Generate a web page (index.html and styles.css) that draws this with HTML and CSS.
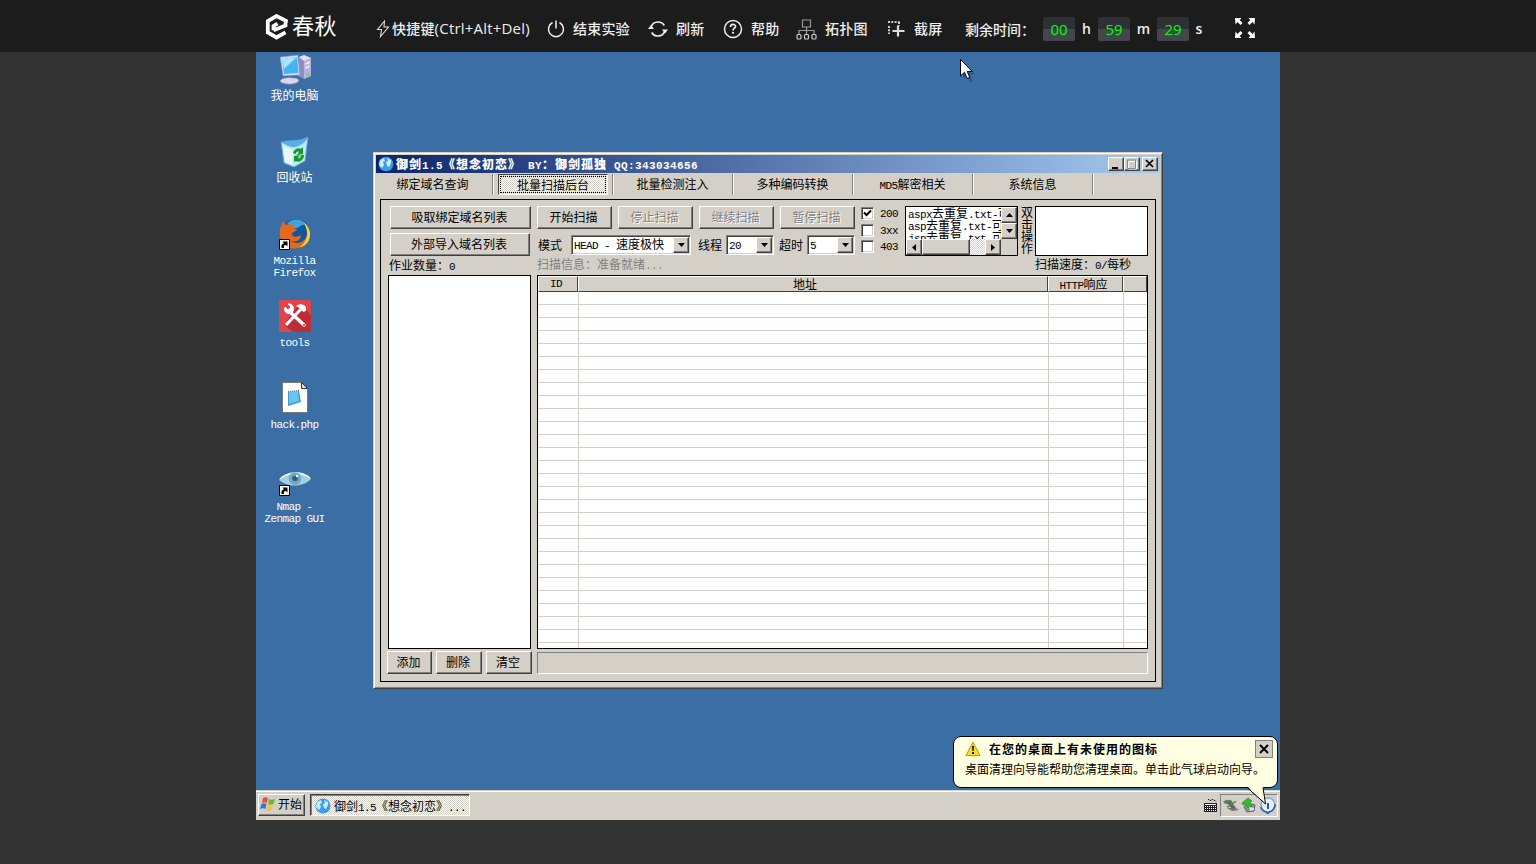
FILE: index.html
```html
<!DOCTYPE html>
<html lang="zh-CN">
<head>
<meta charset="utf-8">
<title>春秋</title>
<link rel="stylesheet" href="styles.css">
</head>
<body>
<header class="topbar">
  <div class="logo">
    <svg width="24" height="26" viewBox="0 0 24 26"><path d="M21 8.4V6.9L11.5 2 2.8 7v11.500l8.700 5 9-5.200M8.500 16.200l12-4.700V8.400M8.500 16.200V12l4-2.500" fill="none" stroke="#fff" stroke-width="3.800"/></svg>
    <span class="logo-text">春秋</span>
  </div>
  <div class="tool t-keys">
    <svg width="14" height="18" viewBox="0 0 14 18"><path d="M8.500 1L1.500 9.500h4L4.500 16.500 12.500 7H8z" fill="none" stroke="#ddd" stroke-width="1.100"/></svg>
    <span>快捷键<span class="en">(Ctrl+Alt+Del)</span></span>
  </div>
  <div class="tool t-end">
    <svg width="18" height="18" viewBox="0 0 18 18"><path d="M5.500 2.500a7.500 7.500 0 1 0 7 0M9 .5v8" fill="none" stroke="#eee" stroke-width="1.500"/></svg>
    <span>结束实验</span>
  </div>
  <div class="tool t-refresh">
    <svg width="20" height="18" viewBox="0 0 20 18"><path d="M3 7.500C4 3.500 7 2 10 2c3 0 5 1.200 6.300 3.500M17 10.500C16 14.500 13 16 10 16c-3 0-5-1.200-6.300-3.500" fill="none" stroke="#eee" stroke-width="1.700"/><path d="M0 9l3-4 3 4zM20 9.500l-3 4-3-4z" fill="#eee"/></svg>
    <span>刷新</span>
  </div>
  <div class="tool t-help">
    <svg width="20" height="20" viewBox="0 0 20 20"><circle cx="10" cy="10" r="8.500" fill="none" stroke="#eee" stroke-width="1.500"/><path d="M7.500 8c0-3.500 5-3.300 5-.6 0 1.800-2.500 1.800-2.500 4" fill="none" stroke="#eee" stroke-width="1.700"/><circle cx="10" cy="13.800" r="1.100" fill="#eee"/></svg>
    <span>帮助</span>
  </div>
  <div class="tool t-topo">
    <svg width="21" height="21" viewBox="0 0 21 21" fill="none" stroke="#999" stroke-width="1.200"><path d="M6.500 1h8v7h-8zM10.500 8v7M3 15v-3.500h15V15"/><g stroke="#ccc"><rect x="1" y="15.500" width="4" height="4.500" rx="1"/><rect x="8.500" y="15.500" width="4" height="4.500" rx="1"/><rect x="16" y="15.500" width="4" height="4.500" rx="1"/></g></svg>
    <span>拓扑图</span>
  </div>
  <div class="tool t-shot">
    <svg width="18" height="18" viewBox="0 0 18 18"><path d="M1 2h11.500M2 6v8" fill="none" stroke="#ccc" stroke-width="2" stroke-dasharray="2 1.300"/><path d="M12 2v4" stroke="#ccc" stroke-width="2" stroke-dasharray="2 1.300"/><path d="M11 5.500v11M5.500 11h12" stroke="#ddd" stroke-width="2.200"/></svg>
    <span>截屏</span>
  </div>
  <div class="timer"><span class="timer-label">剩余时间：</span><b class="digit">00</b><i class="u1">h</i><b class="digit">59</b><i class="u2">m</i><b class="digit">29</b><i class="u3">s</i></div>
  <svg class="full" width="20" height="20" viewBox="0 0 20 20"><path d="M0 0h6.500L4.700 2 7.500 5 5.500 7 2.500 4 .5 6.500zM20 0h-6.500l1.800 2-2.800 3 2 2 3-3 2 2.500zM0 20h6.500l-1.800-2 2.800-3-2-2-3 3-2-2.500zM20 20h-6.500l1.800-2-2.800-3 2-2 3 3 2-2.500z" fill="#fff"/></svg>
</header>

<main class="desktop">
  <nav class="icons">
    <div class="dicon">
      <svg width="32" height="32" viewBox="0 0 32 32"><path d="M20 3l5-2 7 3v18l-7 3-6-3z" fill="#8f8cc2"/><path d="M25 7l7-3v18l-7 3z" fill="#b7b4de"/><path d="M20 3l5-2 7 3-7 3z" fill="#e2e0f5"/><path d="M26.500 9l4-1.700v2l-4 1.700zM26.500 13l4-1.700v2l-4 1.700z" fill="#eef"/><path d="M28 21l2.500-1" stroke="#5d5" stroke-width="2"/><path d="M1 27c1-3 8-4 13-3 5 0 7 2 5 4-4 3-16 3-18-1z" fill="#d9d7ee" stroke="#8b88b5" stroke-width=".7"/><path d="M1 3L19 1l2 20-17 1z" fill="#d8def5" stroke="#7788b8" stroke-width=".7"/><path d="M3 5l15-2 1.500 16L5 20z" fill="#45b4f5"/><path d="M3 5l15-2-13 12z" fill="#a4e4ff"/></svg>
      <span>我的电脑</span>
    </div>
    <div class="dicon">
      <svg width="32" height="32" viewBox="0 0 32 32"><path d="M2 6l10 3L29 1l-3 24-11 6-10-4z" fill="#c0e8fb" stroke="#5ba6d6"/><path d="M2 6c7-3 17 0 27-5-4 9-14 12-20 9z" fill="#5aaee6"/><path d="M4 10l10 4-1 15-7-3z" fill="#e8f8ff"/><path d="M14 17c1-4 6-6 8-4l2-2v7l-6 1 2-3c-2-1-3 0-3 2zM25 19c0 5-5 8-8 6l-2 1v-6l6-1-2 3c2 1 3-1 3-3z" fill="#149a20"/></svg>
      <span>回收站</span>
    </div>
    <div class="dicon">
      <svg width="32" height="32" viewBox="0 0 32 32"><circle cx="17" cy="15" r="14" fill="#14569c"/><path d="M8 6c5-6 15-6 19 1-4-2-7 4-12 3z" fill="#3ba7dd"/><path d="M4 3l3 4c2-1 4-1 5 0l3-1c-3 3 1 5 3 5-1 3-5 3-5 5 0 4 7 3 9 1 0 6-7 8-11 5 6 6 17 3 17-8 0-4-1-7-4-10 8 5 9 15 4 21-7 8-20 7-25-1C-1 17 1 10 4 3z" fill="#e7681d"/><path d="M24 4c8 5 9 15 4 21-2 2-4 4-7 4 9-7 9-17 3-25z" fill="#fbcf3b"/><path d="M.5 21.500h10v10H.5z" fill="#fff" stroke="#000"/><path d="M2.500 30c-.5-3 .5-4.500 2.500-4.500L3.500 23.500h5v5L7 27c-2 0-2.500 1-2 3z"/></svg>
      <span class="m">Mozilla<br>Firefox</span>
    </div>
    <div class="dicon">
      <svg width="32" height="32" viewBox="0 0 32 32"><rect width="32" height="32" rx="2" fill="#e3434b"/><path d="M17 8l6-3 9 10v17H14L5 25z" fill="#bd2d36"/><path d="M10 11l15 14" stroke="#fff" stroke-width="3.500" stroke-linecap="round"/><path d="M7 25L22 9" stroke="#fff" stroke-width="3"/><path d="M17 6c4-3 8-2 10 1v4l-3 1-2-3z" fill="#fff"/><path d="M6 7l3 3 3-3-3-3c5-1 7 5 4 9-4 2-9-1-7-6z" fill="#fff" stroke="#fff"/><circle cx="25" cy="25" r="1" fill="#bd2d36"/></svg>
      <span class="m">tools</span>
    </div>
    <div class="dicon">
      <svg width="32" height="32" viewBox="0 0 32 32"><path d="M3.500 .5h19l6 6v24h-25z" fill="#fff" stroke="#777"/><path d="M22.500 .5v6h6z" fill="#ddd" stroke="#333"/><path d="M9 10l11-1 2 11-13 4z" fill="#3e9bd2"/><path d="M10 10l9-1 1 10-10 3z" fill="#69c5ee"/><path d="M9 9.500l11-1" stroke="#567" stroke-dasharray="1 1"/></svg>
      <span class="m">hack.php</span>
    </div>
    <div class="dicon">
      <svg width="32" height="32" viewBox="0 0 32 32"><path d="M0 16C6 7 24 4 32 15c-7 8-23 9-32 1z" fill="#a4cee4"/><path d="M1 15C8 8 23 7 31 14" fill="none" stroke="#e8faff" stroke-width="1.500"/><circle cx="16" cy="14.500" r="6.300" fill="#70a9c5"/><circle cx="16" cy="14.500" r="2.800" fill="#365f77"/><circle cx="18" cy="12" r="1.200" fill="#fff"/><path d="M.5 21.500h10v10H.5z" fill="#fff" stroke="#000"/><path d="M2.500 30c-.5-3 .5-4.500 2.500-4.500L3.500 23.500h5v5L7 27c-2 0-2.500 1-2 3z"/></svg>
      <span class="m">Nmap -<br>Zenmap GUI</span>
    </div>
  </nav>

  <svg class="cursor" width="16" height="24" viewBox="0 0 16 24"><path d="M3 3v17l4-3 3 6h3l-3-7h5z" fill="#26476c" opacity=".5"/><path d="M.5 .5v16.500l4-3.700 2.700 6.200 2.600-1.100-2.600-6h5z" fill="#fff" stroke="#000"/></svg>

  <section class="window">
    <div class="titlebar">
      <svg width="16" height="16" viewBox="0 0 16 16"><circle cx="8" cy="8" r="7.300" fill="#3c9ce6"/><path d="M2 4l4-2 1 3-2 1 1 3-2 3-3-3zM9 2l4 2v3l-2 4-2-1-1-4 2-1z" fill="#c5ebff"/></svg>
      <span class="title">御剑<span class="m">1.5</span>《想念初恋》<span class="m">&nbsp;BY</span><span class="colon">：</span>御剑孤独<span class="m">&nbsp;QQ:343034656</span></span>
      <div class="caption">
        <span class="cap"><svg width="14" height="12"><path d="M3 9h6v2H3z"/></svg></span>
        <span class="cap"><svg width="14" height="12"><path d="M3.500 3.500h8v7.500h-8z" fill="none" stroke="#fff"/><path d="M2.500 2v8.500h8V2M2 2h9" fill="none" stroke="#888"/></svg></span>
        <span class="cap close"><svg width="14" height="12"><path d="M3 2l7 7M10 2L3 9" stroke="#000" stroke-width="1.700"/></svg></span>
      </div>
    </div>
    <div class="tabs">
      <span class="tab">绑定域名查询</span>
      <span class="tab"><span class="tab-on">批量扫描后台</span></span>
      <span class="tab">批量检测注入</span>
      <span class="tab">多种编码转换</span>
      <span class="tab"><span><span class="m">MD5</span>解密相关</span></span>
      <span class="tab">系统信息</span>
    </div>
    <div class="panel">
      <div class="left">
        <div class="btn wide">吸取绑定域名列表</div>
        <div class="btn wide second">外部导入域名列表</div>
        <div class="count">作业数量<span class="colon">：</span><span class="m">0</span></div>
        <div class="joblist"></div>
        <div class="jobbtns"><span class="btn">添加</span><span class="btn">删除</span><span class="btn">清空</span></div>
      </div>
      <div class="right">
        <div class="options">
          <div class="controls">
            <div class="scanbtns"><span class="btn">开始扫描</span><span class="btn off">停止扫描</span><span class="btn off">继续扫描</span><span class="btn off">暂停扫描</span></div>
            <div class="combos">
              <span class="lab mode">模式</span><span class="combo big"><span class="val"><span class="m">HEAD - </span>速度极快</span><span class="arrow"><svg width="7" height="4"><path d="M0 0h7L3.500 4z"/></svg></span></span>
              <span class="lab thread">线程</span><span class="combo"><span class="val"><span class="m">20</span></span><span class="arrow"><svg width="7" height="4"><path d="M0 0h7L3.500 4z"/></svg></span></span>
              <span class="lab timeout">超时</span><span class="combo"><span class="val"><span class="m">5</span></span><span class="arrow"><svg width="7" height="4"><path d="M0 0h7L3.500 4z"/></svg></span></span>
            </div>
            <div class="info">扫描信息<span class="colon">：</span>准备就绪<span class="m">...</span></div>
          </div>
          <div class="checks">
            <label><i class="box"><svg width="9" height="9"><path d="M1 3.500L3.500 6 8 1.500" fill="none" stroke="#000" stroke-width="2"/></svg></i><span class="m">200</span></label>
            <label><i class="box"></i><span class="m">3xx</span></label>
            <label><i class="box"></i><span class="m">403</span></label>
          </div>
          <div class="files">
            <div class="names"><div><span class="m">aspx</span>去重复<span class="m">.txt-</span>可</div><div><span class="m">asp</span>去重复<span class="m">.txt-</span>可</div><div><span class="m">jsp</span>去重复<span class="m">.txt-</span>可</div></div>
            <div class="vbar"><span class="sb"><svg width="7" height="4"><path d="M0 4h7L3.500 0z"/></svg></span><span class="sb"><svg width="7" height="4"><path d="M0 0h7L3.500 4z"/></svg></span></div>
            <div class="hbar"><span class="sb"><svg width="4" height="7"><path d="M4 0v7L0 3.500z"/></svg></span><span class="sb thumb"></span><span class="gap"></span><span class="sb"><svg width="4" height="7"><path d="M0 0v7l4-3.500z"/></svg></span></div>
            <div class="corner"></div>
          </div>
          <div class="vtext">双击操作</div>
          <div class="speed"><div class="speedbox"></div><div class="speedtext">扫描速度<span class="colon">：</span><span class="m">0/</span>每秒</div></div>
        </div>
        <div class="table">
          <div class="cols head"><span class="m">ID</span><span class="addr">地址</span><span><span><span class="m">HTTP</span>响应</span></span><span></span></div>
          <div class="cols rows"><span></span><span></span><span></span><span></span></div>
        </div>
        <div class="status"></div>
      </div>
    </div>
  </section>

  <footer class="taskbar">
    <div class="start"><svg width="16" height="16" viewBox="0 0 16 16"><path d="M3 2c2-1 3-1 5 0L7 7C5 6 4 6 2 7z" fill="#e8512b"/><path d="M9 3c2 1 3 1 6 0l-1.500 5c-2 1-4 1-5.500 0z" fill="#69b832"/><path d="M1.500 8c2-1 3-1 5 0l-1 5C4 12 2 12 0 13z" fill="#3474dc"/><path d="M7.500 9c2 1 3 1 5.500 0l-1.500 5c-2 1-3.500 1-5 0z" fill="#f8c32a"/></svg>开始</div>
    <div class="task"><svg width="16" height="16" viewBox="0 0 16 16"><circle cx="8" cy="8" r="7.500" fill="#3c9ce6"/><path d="M2 4l4-2 1 3-2 1 1 3-2 3-3-3zM9 2l4 2v3l-2 4-2-1-1-4 2-1z" fill="#c5ebff"/></svg><span>御剑<span class="m">1.5</span>《想念初恋》<span class="m">...</span></span></div>
    <svg class="kbd" width="13" height="15" viewBox="0 0 13 15"><path d="M4 1.500h1l1 1h1l1-1h1l1 1h1l1 1" fill="none" stroke="#222"/><path d="M0 5h13v9H0z" fill="#222"/><path d="M1 6.500h11" stroke="#fff"/><path d="M1 8.500h11M1 10.500h11M1 12.500h11" stroke="#fff" stroke-dasharray="1 1"/></svg>
    <div class="tray">
      <svg width="16" height="16" viewBox="0 0 16 16"><path d="M0 4l8-1 2 3-8 1zM4 11l9 0 3 2-7 1z" fill="#777"/><path d="M2 4l6 0 5 7-4 1z" fill="#666"/><path d="M2 4l5-.5M8 7l5-2.500M4 10l4-1.500" stroke="#4a9b3f" stroke-width="1.500"/></svg>
      <svg width="16" height="16" viewBox="0 0 16 16"><path d="M6 6l8 2-1 6-7 1-3-5z" fill="#8e9398" stroke="#666"/><path d="M1 6l6-5 4 3-2 1 2 4-4 2-3-4-2 1z" fill="#2fbd2c" stroke="#237c20" stroke-width=".6"/><path d="M8 10l5 1v2l-4 1z" fill="#dde"/></svg>
      <svg width="18" height="17" viewBox="0 0 18 17"><circle cx="9" cy="8" r="7" fill="#e8f2ff" stroke="#7ba5da" stroke-width="1.500"/><path d="M16 7c0 4-2 7-6 8l-1 2-2-2c-3-1-5-3-5-5" fill="none" stroke="#2c5fa6" stroke-width="1.500"/><path d="M8 6h2v6H8z" fill="#25569c"/></svg>
    </div>
  </footer>

  <aside class="balloon">
    <svg class="tail" width="22" height="20" viewBox="0 0 22 20"><path d="M0 0l19 18L16 0" fill="#ffffe1"/><path d="M0 1.500l18.500 16.500L16 1.500" fill="none" stroke="#000"/></svg>
    <div class="bhead"><svg width="16" height="16" viewBox="0 0 16 16"><path d="M8 1l7 13.500H1z" fill="#fddc22" stroke="#b59b22" stroke-linejoin="round"/><path d="M7 5h2l-.4 5H7.400zM7 11h2v2H7z" fill="#111"/></svg><span>在您的桌面上有未使用的图标</span><i class="bclose"><svg width="10" height="10"><path d="M1 1l8 8M9 1L1 9" stroke="#000" stroke-width="2"/></svg></i></div>
    <div class="bbody">桌面清理向导能帮助您清理桌面。单击此气球启动向导。</div>
  </aside>
</main>
</body>
</html>
```

FILE: styles.css
```css
* { box-sizing: border-box; }
body {
  margin: 0;
  width: 1536px;
  height: 864px;
  overflow: hidden;
  background: #333;
  font: 12px/12px "Noto Sans CJK SC", sans-serif;
  color: #000;
}
svg { display: block; flex: none; }
i, b { font-style: normal; font-weight: normal; }
/* half-width characters, 6px advance */
.m { font-family: "Liberation Mono", monospace; font-size: 11px; letter-spacing: -.6px; line-height: 0; white-space: pre; }
.colon { font-family: "Noto Sans CJK TC", sans-serif; line-height: 0; }

/* top bar */
.topbar {
  height: 52px;
  background: #1c1c1c;
  color: #eee;
  display: flex;
  align-items: center;
  padding: 6px 0 0 265px;
  font-size: 14px;
  line-height: 20px;
  font-weight: 500;
  white-space: nowrap;
}
.logo { width: 111px; display: flex; gap: 3px; align-items: center; margin-top: -5px; }
.logo-text { font-size: 22px; line-height: 22px; font-weight: 400; color: #fff; letter-spacing: .5px; padding-bottom: 5px; }
.tool { display: flex; align-items: center; letter-spacing: .2px; }
.tool > span { padding-bottom: 2px; }
.en { font-family: "Open Sans", sans-serif; font-size: 15px; line-height: 0; letter-spacing: .2px; }
.t-keys { width: 171px; gap: 2px; }
.t-end { width: 101px; gap: 8px; }
.t-refresh { width: 75px; gap: 8px; }
.t-help { width: 73px; gap: 8px; }
.t-topo { width: 91px; gap: 8px; }
.t-shot { width: 78px; gap: 9px; }
.timer { display: flex; align-items: center; width: 270px; font-family: "Open Sans", "Noto Sans CJK SC", sans-serif; }
.timer i { font-weight: 600; }
.timer-label { width: 78px; font-family: "Noto Sans CJK SC", sans-serif; font-weight: 500; }
.digit {
  width: 32px;
  height: 24px;
  line-height: 25px;
  text-align: center;
  border-radius: 2px;
  background: linear-gradient(#2d3035 50%, #43464b 50%);
  color: #0f0;
  font-size: 15px;
}
.u1 { width: 23px; text-align: center; }
.u2 { width: 27px; text-align: center; }
.u3 { width: 20px; text-align: center; }
.full { margin-top: -3px; }

/* desktop */
.desktop {
  position: relative;
  width: 1024px;
  height: 768px;
  margin: 0 auto;
  background: #3a6ea5;
}
.icons { display: flex; flex-direction: column; width: 77px; padding-top: 2px; }
.dicon { height: 82px; display: flex; flex-direction: column; align-items: center; gap: 4px; color: #fff; text-align: center; }
.dicon > span { margin-top: -1px; }
.dicon > .m { line-height: 12px; margin-top: 1px; }
.cursor { position: absolute; left: 704px; top: 7px; z-index: 3; }

/* application window */
.window {
  position: absolute;
  left: 117px;
  top: 100px;
  width: 790px;
  height: 537px;
  background: #d4d0c8;
  border: 1px solid;
  border-color: #d4d0c8 #404040 #404040 #d4d0c8;
  box-shadow: inset 1px 1px #fff, inset -1px -1px #808080;
  padding: 2px;
}
.titlebar {
  height: 18px;
  padding: 0 2px;
  display: flex;
  align-items: center;
  background: linear-gradient(90deg, #0a246a, #a6caf0);
  color: #fff;
}
.title { flex: 1; margin-left: 2px; font-weight: 900; letter-spacing: 1px; white-space: nowrap; }
.title .m { font-weight: 700; letter-spacing: .4px; }
.caption { display: flex; }
.cap, .btn, .arrow, .sb {
  background: #d4d0c8;
  border: 1px solid;
  border-color: #fff #404040 #404040 #fff;
  box-shadow: inset -1px -1px #808080;
}
.cap { width: 16px; height: 14px; }
.cap.close { margin-left: 2px; }
.tabs { display: flex; height: 22px; padding-top: 1px; margin-left: -2px; }
.tab {
  width: 120px;
  display: flex;
  align-items: center;
  justify-content: center;
  padding: 0 2px 1px 0;
  border-right: 1px solid #fff;
  box-shadow: inset -1px 0 #808080;
}
.tab-on {
  width: 110px;
  height: 21px;
  margin-left: 1px;
  padding-top: 1px;
  line-height: 18px;
  text-align: center;
  border: 1px solid;
  border-color: #404040 #fff #fff #404040;
  outline: 1px dotted #000;
  outline-offset: -3px;
  background: repeating-conic-gradient(#fff 0 25%, #d4d0c8 0 50%) 0 0 / 2px 2px;
}
.panel {
  width: 776px;
  height: 483px;
  margin: 4px 0 0 4px;
  border: 1px solid #000;
  padding: 6px 7px 0 6px;
  display: flex;
  gap: 5px;
}
.btn { display: flex; align-items: center; justify-content: center; height: 23px; padding: 0 2px 2px 0; }
.btn.off { color: #808080; text-shadow: 1px 1px #fff; }

.left { width: 145px; display: flex; flex-direction: column; }
.left .wide { width: 141px; margin-left: 3px; }
.left .second { margin-top: 4px; width: 140px; }
.count { height: 19px; padding: 3px 0 0 2px; }
.joblist { width: 143px; height: 374px; margin-left: 1px; border: 1px solid #000; background: #fff; }
.jobbtns { display: flex; gap: 4px; margin-top: 2px; }
.jobbtns .btn { width: 46px; }
.jobbtns .btn:first-child { width: 45px; }

.right { width: 611px; }
.options { display: flex; height: 69px; }
.controls { width: 324px; }
.scanbtns { display: flex; gap: 6px; }
.scanbtns .btn { width: 75px; }
.combos { display: flex; margin-top: 6px; align-items: center; height: 20px; }
.lab { white-space: nowrap; }
.mode { width: 34px; padding-left: 1px; }
.thread { width: 35px; padding-left: 7px; }
.timeout { width: 33px; padding-left: 5px; }
.combo {
  display: flex;
  width: 48px;
  height: 20px;
  padding: 1px;
  background: #fff;
  border: 1px solid;
  border-color: #808080 #fff #fff #808080;
  box-shadow: inset 1px 1px #404040, inset -1px -1px #d4d0c8;
}
.combo.big { width: 120px; }
.val { flex: 1; line-height: 14px; padding-left: 1px; white-space: nowrap; }
.arrow { width: 16px; height: 16px; display: flex; align-items: center; justify-content: center; }
.info { margin-top: 3px; color: #808080; }

.checks { width: 44px; padding-top: 1px; }
.checks label { display: flex; gap: 6px; height: 16.500px; }
.checks .m { line-height: 15px; }
.box {
  width: 13px;
  height: 13px;
  padding: 1px;
  background: #fff;
  border: 1px solid;
  border-color: #808080 #fff #fff #808080;
  box-shadow: inset 1px 1px #404040, inset -1px -1px #d4d0c8;
}
.files {
  width: 113px;
  height: 50px;
  border: 1px solid #000;
  background: #fff;
  display: grid;
  grid-template: 32px 16px / 95px 16px;
}
.names { overflow: hidden; white-space: nowrap; padding-left: 2px; }
.vbar { display: flex; flex-direction: column; }
.vbar .sb { height: 16px; }
.sb { width: 16px; display: flex; align-items: center; justify-content: center; }
.hbar { display: flex; }
.thumb { width: 48px; }
.gap { flex: 1; background: repeating-conic-gradient(#fff 0 25%, #d4d0c8 0 50%) 0 0 / 2px 2px; }
.corner { background: #d4d0c8; }
.vtext { width: 17px; padding: 0 2px 0 3px; word-break: break-all; }
.speedbox { width: 113px; height: 50px; border: 1px solid #000; background: #fff; }
.speedtext { margin-top: 2px; white-space: nowrap; }

.table { width: 611px; height: 374px; border: 1px solid #000; background: #fff; }
.cols { display: grid; grid-template-columns: 40px 470px 75px 24px; }
.head { height: 16px; }
.head > span {
  display: flex;
  align-items: center;
  justify-content: center;
  background: #d4d0c8;
  border: 1px solid;
  border-color: #fff #404040 #404040 #fff;
  padding-right: 4px;
  line-height: 12px;
}
.head > .addr { padding-right: 16px; }
.rows { height: 356px; background: repeating-linear-gradient(transparent 0 12px, #d4d0c8 12px 13px); }
.rows > span + span { border-left: 1px solid #d4d0c8; }
.status { width: 611px; height: 22px; margin-top: 3px; border: 1px solid; border-color: #808080 #fff #fff #808080; }

/* taskbar */
.taskbar {
  position: absolute;
  left: 0;
  bottom: 0;
  width: 1024px;
  height: 30px;
  background: #d4d0c8;
  box-shadow: inset 0 1px #d4d0c8, inset 0 2px #fff;
  display: flex;
  align-items: center;
  padding: 0 2px;
}
.start {
  width: 47px;
  height: 22px;
  display: flex;
  align-items: center;
  gap: 2px;
  padding: 0 0 2px 1px;
  border: 1px solid;
  border-color: #fff #404040 #404040 #fff;
  box-shadow: inset -1px -1px #808080;
  white-space: nowrap;
}
.task {
  width: 160px;
  height: 22px;
  margin-left: 5px;
  padding: 1px 0 0 4px;
  display: flex;
  align-items: center;
  gap: 3px;
  white-space: nowrap;
  border: 1px solid;
  border-color: #404040 #fff #fff #404040;
  box-shadow: inset 1px 1px #808080;
  background: repeating-conic-gradient(#fff 0 25%, #d4d0c8 0 50%) 0 0 / 2px 2px;
}
.kbd { margin-left: auto; }
.tray {
  width: 58px;
  height: 23px;
  margin-left: 3px;
  padding: 0 2px;
  display: flex;
  align-items: center;
  gap: 2px;
  border: 1px solid;
  border-color: #808080 #fff #fff #808080;
}

/* notification balloon */
.balloon {
  position: absolute;
  left: 697px;
  top: 684px;
  width: 325px;
  height: 52px;
  border: 1px solid #000;
  border-radius: 8px;
  background: #ffffe1;
  padding: 3px 4px 0 11px;
}
.tail { position: absolute; left: 293px; top: 49px; }
.bhead { display: flex; align-items: center; height: 18px; font-weight: 700; letter-spacing: 1px; }
.bhead span { flex: 1; margin-left: 8px; }
.bclose { width: 18px; height: 18px; padding: 3px; background: #d4d0c8; border: 1px solid #808080; }
.bbody { margin-top: 5px; white-space: nowrap; }
```
